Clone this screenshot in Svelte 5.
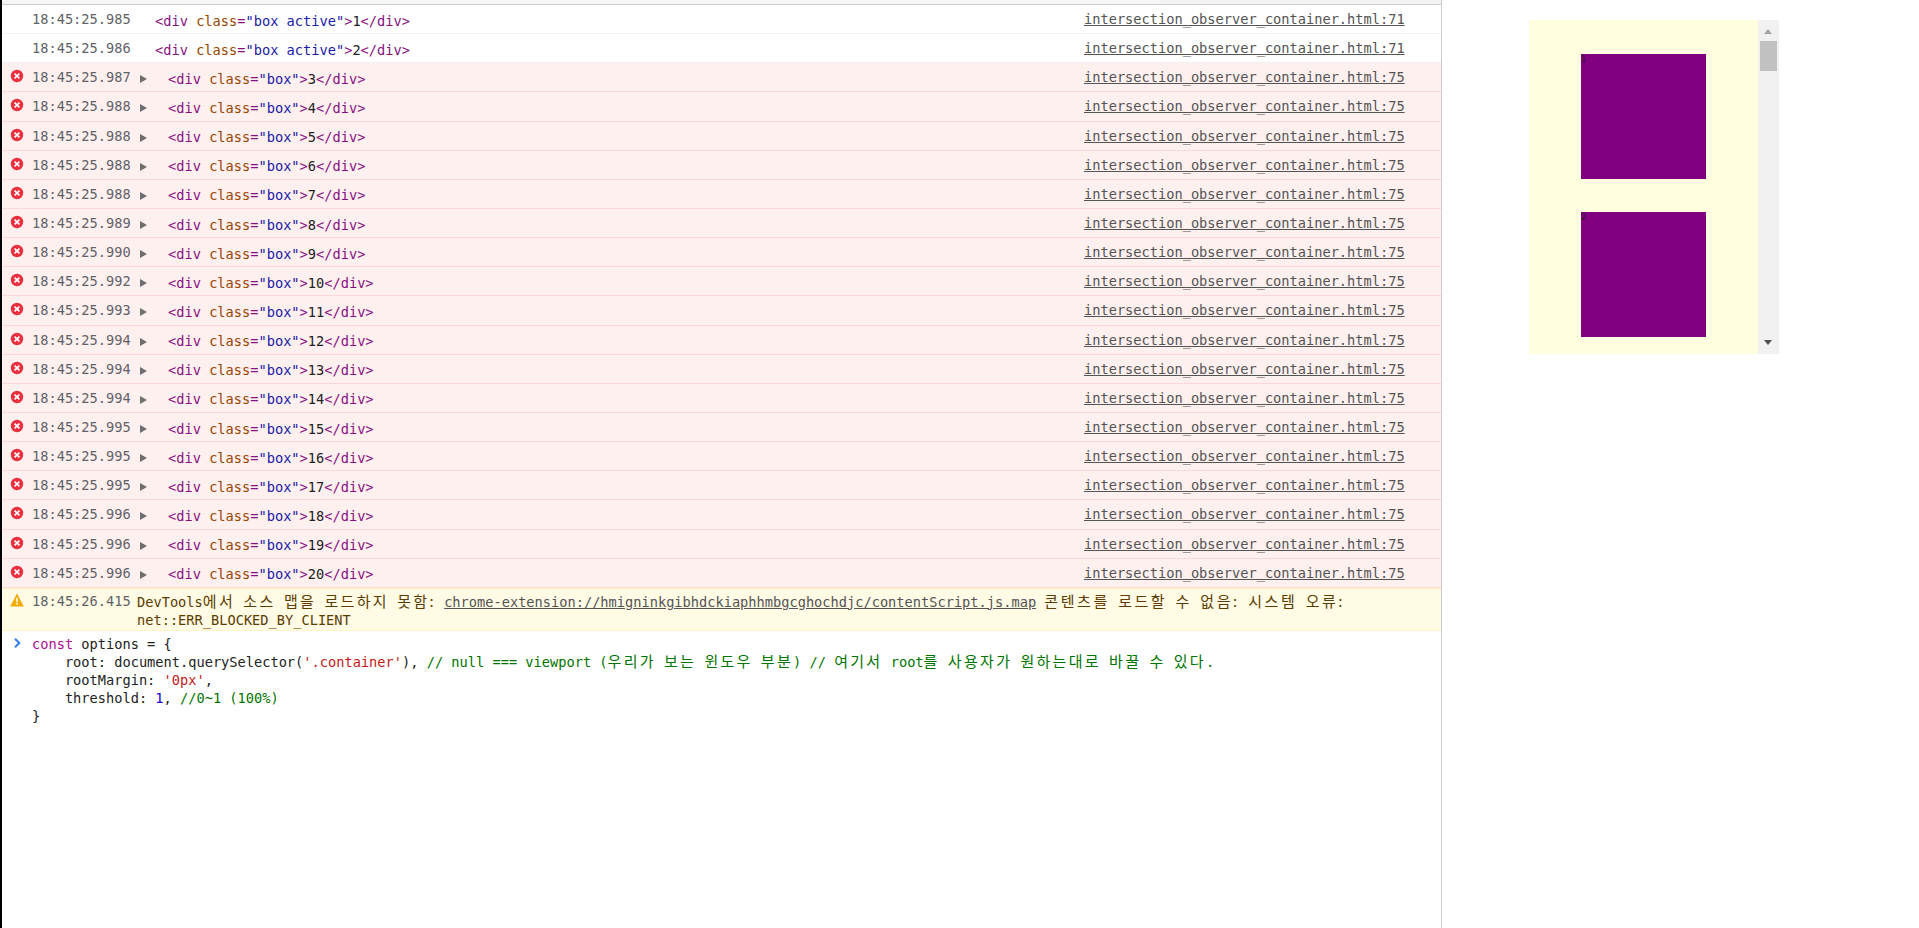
<script>
  const rows = [
    { time: "18:45:25.987", n: 3 }, { time: "18:45:25.988", n: 4 }, { time: "18:45:25.988", n: 5 },
    { time: "18:45:25.988", n: 6 }, { time: "18:45:25.988", n: 7 }, { time: "18:45:25.989", n: 8 },
    { time: "18:45:25.990", n: 9 }, { time: "18:45:25.992", n: 10 }, { time: "18:45:25.993", n: 11 },
    { time: "18:45:25.994", n: 12 }, { time: "18:45:25.994", n: 13 }, { time: "18:45:25.994", n: 14 },
    { time: "18:45:25.995", n: 15 }, { time: "18:45:25.995", n: 16 }, { time: "18:45:25.995", n: 17 },
    { time: "18:45:25.996", n: 18 }, { time: "18:45:25.996", n: 19 }, { time: "18:45:25.996", n: 20 },
  ];
</script>

<div class="page">
  <div class="console">
    <div class="topbar"><div class="topbar-fill"></div></div>

    <div class="row">
      <span class="icon"></span>
      <span class="time">18:45:25.985</span>
      <span class="msg plain"><span class="tag">&lt;div</span> <span class="attr">class</span><span class="tag">=</span><span class="val">"box active"</span><span class="tag">&gt;</span>1<span class="tag">&lt;/div&gt;</span></span>
      <a class="src" href="#top">intersection_observer_container.html:71</a>
    </div>
    <div class="row">
      <span class="icon"></span>
      <span class="time">18:45:25.986</span>
      <span class="msg plain"><span class="tag">&lt;div</span> <span class="attr">class</span><span class="tag">=</span><span class="val">"box active"</span><span class="tag">&gt;</span>2<span class="tag">&lt;/div&gt;</span></span>
      <a class="src" href="#top">intersection_observer_container.html:71</a>
    </div>

    {#each rows as r}
      <div class="row error">
        <span class="icon">
          <svg width="14" height="14" viewBox="0 0 14 14">
            <circle cx="7" cy="7" r="6.2" fill="#e8303f" />
            <path d="M4.6 4.6l4.8 4.8M9.4 4.6l-4.8 4.8" stroke="#fff" stroke-width="1.7" />
          </svg>
        </span>
        <span class="time">{r.time}</span>
        <span class="caret"></span>
        <span class="msg"><span class="tag">&lt;div</span> <span class="attr">class</span><span class="tag">=</span><span class="val">"box"</span><span class="tag">&gt;</span>{r.n}<span class="tag">&lt;/div&gt;</span></span>
        <a class="src" href="#top">intersection_observer_container.html:75</a>
      </div>
    {/each}

    <div class="warn">
      <span class="icon">
        <svg width="14" height="14" viewBox="0 0 14 14">
          <path d="M7 .6L13.8 13.4H.2z" fill="#f0ab00" />
          <path d="M7 5v4.4M7 10.3v1.5" stroke="#fff" stroke-width="1.5" />
        </svg>
      </span>
      <span class="time">18:45:26.415</span>
      <div class="warn-msg">
        <div>DevTools<span class="ko tight">에서 소스 맵을 로드하지 못함:</span> <a href="#top">chrome-extension://hmigninkgibhdckiaphhmbgcghochdjc/contentScript.js.map</a> <span class="ko wide">콘텐츠를 로드할 수 없음: 시스템 오류:</span></div>
        <div>net::ERR_BLOCKED_BY_CLIENT</div>
      </div>
    </div>

    <div class="code">
      <svg class="prompt" width="7" height="10" viewBox="0 0 7 10">
        <path d="M1 .8l4.2 4.2L1 9.2" fill="none" stroke="#3b82f0" stroke-width="2.2" />
      </svg>
      <pre><span class="kw">const</span> options = {"{"}
    root: document.querySelector(<span class="str">'.container'</span>), <span class="cm">// null === viewport (<span class="ko">우리가 보는 윈도우 부분</span>) // <span class="ko">여기서</span> root<span class="ko">를 사용자가 원하는대로 바꿀 수 있다</span>.</span>
    rootMargin: <span class="str">'0px'</span>,
    threshold: <span class="num">1</span>, <span class="cm">//0~1 (100%)</span>
{"}"}</pre>
    </div>
  </div>

  <div class="preview">
    <div class="scroller">
      <div class="container">
        <div class="box">1</div>
        <div class="box">2</div>
      </div>
      <div class="scrollbar">
        <span class="arrow up"></span>
        <span class="thumb"></span>
        <span class="arrow down"></span>
      </div>
    </div>
  </div>
</div>

<style>
  :global(body) {
    margin: 0;
    background: #fff;
  }

  .page {
    display: flex;
    height: 928px;
    overflow: hidden;
    font-family: "DejaVu Sans Mono", monospace;
    font-size: 13.66px;
    color: #222;
  }

  .console {
    width: 1439px;
    flex: none;
    border-left: 2px solid #000;
    border-right: 1px solid #ccc;
  }

  .topbar {
    height: 4px;
    background: #f1f3f4;
    border-bottom: 1px solid #ccc;
  }

  .topbar-fill {
    width: 1158px;
    height: 4px;
    background: #f5f6f7;
  }

  .row {
    display: flex;
    align-items: center;
    box-sizing: border-box;
    height: 29.15px;
    border-bottom: 1px solid #f0f0f0;
  }

  .row.error {
    background: #fff0f0;
    border-bottom-color: #ffd6d6;
  }

  .icon {
    flex: none;
    width: 30px;
    display: flex;
    justify-content: center;
    padding-bottom: 2px;
  }

  .time {
    flex: none;
    width: 107px;
    color: #5f6368;
  }

  .caret {
    flex: none;
    width: 0;
    height: 0;
    margin: 4px 0 0 1px;
    border-left: 7px solid #6e6e6e;
    border-top: 4px solid transparent;
    border-bottom: 4px solid transparent;
  }

  .msg {
    flex: 1;
    margin: 3px 0 0 21px;
    white-space: pre;
  }

  .msg.plain {
    margin-left: 16px;
  }

  .tag { color: #881280; }
  .attr { color: #994500; }
  .val { color: #1a1aa6; }

  .src {
    flex: none;
    width: 357px;
    color: #545454;
    text-decoration: underline;
  }

  .warn {
    display: flex;
    box-sizing: border-box;
    height: 43px;
    padding-top: 4px;
    background: #fffbe5;
    border-bottom: 1px solid #fff5c2;
    border-top: 1px solid #fff5c2;
    color: #5c3c00;
  }

  .warn .icon {
    padding: 0;
  }

  .warn .time {
    width: 105px;
  }

  .warn-msg {
    line-height: 18px;
    white-space: nowrap;
  }

  .warn-msg a {
    color: #545454;
    text-decoration: underline;
  }

  .ko {
    font-family: "Noto Sans CJK KR", sans-serif;
    font-size: 15px;
    line-height: 0;
    letter-spacing: 2.3px;
    word-spacing: 2.5px;
  }

  .ko.tight {
    letter-spacing: 2.3px;
    word-spacing: 2.7px;
  }

  .ko.wide {
    letter-spacing: 2.55px;
    word-spacing: 2.5px;
  }

  .code {
    display: flex;
    padding-top: 5.6px;
  }

  .prompt {
    flex: none;
    margin: 2px 11px 0 12px;
  }

  pre {
    margin: 0;
    font: inherit;
    line-height: 17.9px;
    color: #222;
  }

  .kw { color: #aa0d91; }
  .str { color: #c41a16; }
  .num { color: #1c00cf; }
  .cm { color: #007400; }

  .preview {
    flex: 1;
    padding: 20px 0 0 87px;
  }

  .scroller {
    display: flex;
    width: 250px;
    height: 334px;
  }

  .container {
    width: 229px;
    height: 334px;
    box-sizing: border-box;
    padding-top: 34px;
    overflow: hidden;
    background: #ffffe0;
    display: flex;
    flex-direction: column;
    align-items: center;
    gap: 33px;
  }

  .box {
    flex: none;
    width: 125px;
    height: 125px;
    background: #800080;
    font-size: 8px;
    line-height: 12px;
    color: #222;
  }

  .scrollbar {
    flex: 1;
    position: relative;
    background: #f1f1f1;
  }

  .thumb {
    position: absolute;
    left: 2px;
    top: 21px;
    width: 17px;
    height: 30px;
    background: #c1c1c1;
  }

  .arrow {
    position: absolute;
    left: 6px;
    width: 0;
    height: 0;
    border-left: 4.5px solid transparent;
    border-right: 4.5px solid transparent;
  }

  .arrow.up {
    top: 9px;
    border-bottom: 5px solid #a3a3a3;
  }

  .arrow.down {
    bottom: 9px;
    border-top: 5px solid #505050;
  }
</style>
